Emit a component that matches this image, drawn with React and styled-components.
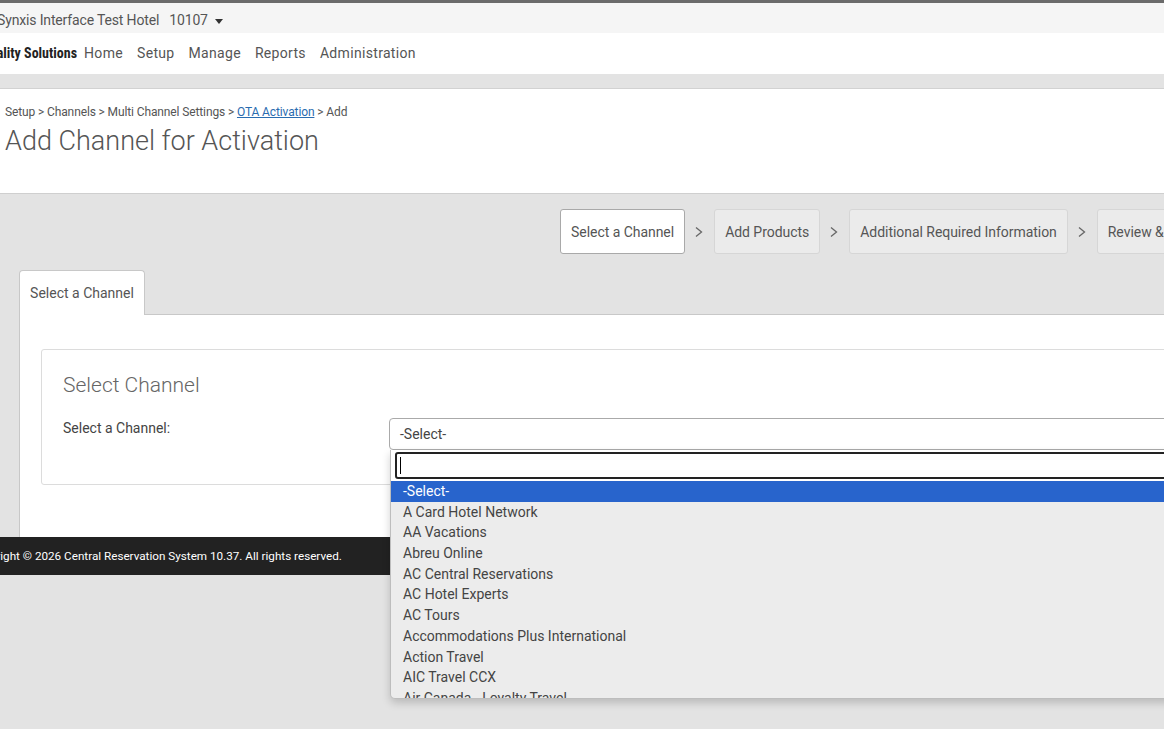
import React from "react";
import styled, { createGlobalStyle } from "styled-components";

const Global = createGlobalStyle`
  html, body { margin: 0; padding: 0; background: #e3e3e3; overflow: hidden; }
  body { font-family: Roboto, "Liberation Sans", Arial, sans-serif; color: #555; }
  * { box-sizing: border-box; }
`;

const Page = styled.div`
  width: 1400px;
  margin-left: -40px;
  min-height: 729px;
  background: #e3e3e3;
  display: flex;
  flex-direction: column;
`;

const TopBar = styled.div`
  height: 33px;
  border-top: 3px solid #6b6b6b;
  background: #f5f5f5;
  display: flex;
  align-items: center;
  padding: 4px 0 0 37px;
  font-size: 14px;
  letter-spacing: -0.15px;
  color: #555;
  gap: 10px;
`;

const Caret = styled.span`
  display: inline-block;
  width: 0;
  height: 0;
  border-left: 4px solid transparent;
  border-right: 4px solid transparent;
  border-top: 5px solid #333;
  margin-left: 7px;
  vertical-align: middle;
`;

const NavBar = styled.div`
  height: 41px;
  background: #fff;
  display: flex;
  align-items: center;
  gap: 14px;
  padding-bottom: 2px;
`;

const Brand = styled.span`
  font-family: "Liberation Sans Narrow", "Roboto Condensed", "Liberation Sans", sans-serif;
  font-weight: bold;
  font-size: 14px;
  color: #222;
  margin-right: -7px;
`;

const NavLink = styled.span`
  font-size: 14px;
  color: #555;
  letter-spacing: 0.32px;
`;

const Strip = styled.div`
  height: 15px;
  background: #e3e3e3;
  border-bottom: 1px solid #d2d2d2;
`;

const Header = styled.div`
  height: 105px;
  background: #fff;
  border-bottom: 1px solid #cfcfcf;
  padding: 14px 0 0 45px;
`;

const Crumbs = styled.div`
  font-size: 12px;
  letter-spacing: -0.12px;
  color: #555;
  line-height: 18px;
  a { color: #2a6cb0; text-decoration: underline; }
`;

const Title = styled.h1`
  margin: 3px 0 0;
  font-size: 27px;
  font-weight: 300;
  color: #555;
  line-height: 34px;
`;

const Steps = styled.div`
  display: flex;
  align-items: center;
  padding: 15px 0 0 600px;
  height: 60px;
`;

const Step = styled.div`
  height: 45px;
  display: flex;
  align-items: center;
  padding: 0 10px;
  font-size: 14px;
  letter-spacing: -0.04px;
  white-space: nowrap;
  border-radius: 3px;
  color: #555;
  background: ${(p) => (p.$active ? "#fff" : "#ebebeb")};
  border: 1px solid ${(p) => (p.$active ? "#a9a9a9" : "#d6d6d6")};
`;

const Chevron = styled.svg`
  width: 29px;
  height: 14px;
  flex: none;
`;

const TabArea = styled.div`
  padding: 16px 0 0 59px;
`;

const TabRow = styled.div`
  display: flex;
`;

const Tab = styled.div`
  height: 45px;
  width: 126px;
  display: flex;
  align-items: center;
  justify-content: center;
  font-size: 14px;
  background: #fff;
  border: 1px solid #c8c8c8;
  border-bottom: none;
  border-radius: 4px 4px 0 0;
  position: relative;
  z-index: 1;
  margin-bottom: -1px;
`;

const Panel = styled.div`
  background: #fff;
  border: 1px solid #c8c8c8;
  border-right: none;
  border-bottom: none;
  height: 223px;
  padding: 34px 0 0 21px;
`;

const Card = styled.div`
  border: 1px solid #dcdcdc;
  border-radius: 3px;
  height: 136px;
  padding: 22px 0 0 21px;
`;

const CardTitle = styled.h2`
  margin: 0;
  font-size: 21px;
  font-weight: 300;
  color: #666;
  line-height: 26px;
`;

const FieldRow = styled.div`
  display: grid;
  grid-template-columns: 326px 1fr;
  margin-top: 20px;
`;

const Label = styled.div`
  font-size: 14px;
  color: #444;
  padding-top: 2px;
`;

const SelectWrap = styled.div`
  position: relative;
`;

const SelectBox = styled.div`
  height: 32px;
  border: 1px solid #aaa;
  border-radius: 4px;
  display: flex;
  align-items: center;
  padding-left: 10px;
  font-size: 14px;
  color: #444;
  background: #fff;
`;

const Dropdown = styled.div`
  position: absolute;
  top: 32px;
  left: 1px;
  right: 0;
  height: 249px;
  background: #ececec;
  border: 1px solid #bdbdbd;
  border-top: none;
  border-radius: 0 0 0 5px;
  box-shadow: 0 4px 8px rgba(0, 0, 0, 0.18);
  overflow: hidden;
  z-index: 5;
`;

const SearchWrap = styled.div`
  padding: 2px 0 2px 4px;
  background: #fff;
`;

const Search = styled.div`
  height: 27px;
  border: 2px solid #222;
  border-radius: 3px;
  background: #fff;
  display: flex;
  align-items: center;
  padding-left: 3px;
`;

const Cursor = styled.span`
  width: 1px;
  height: 17px;
  background: #000;
`;

const Option = styled.div`
  height: 20.7px;
  line-height: 20.7px;
  padding-left: 12px;
  font-size: 14px;
  white-space: nowrap;
  color: ${(p) => (p.$selected ? "#fff" : "#444")};
  background: ${(p) => (p.$selected ? "#2864cc" : "transparent")};
`;

const Footer = styled.div`
  height: 38px;
  background: #222;
  color: #fff;
  font-size: 11.7px;
  display: flex;
  align-items: center;
  padding-left: 10px;
`;

const options = [
  "-Select-",
  "A Card Hotel Network",
  "AA Vacations",
  "Abreu Online",
  "AC Central Reservations",
  "AC Hotel Experts",
  "AC Tours",
  "Accommodations Plus International",
  "Action Travel",
  "AIC Travel CCX",
  "Air Canada - Loyalty Travel",
  "Air Canada Vacations",
];

const Arrow = () => (
  <Chevron viewBox="0 0 29 14">
    <path d="M11 2.5 L16.5 7 L11 11.5" fill="none" stroke="#666" strokeWidth="1.3" />
  </Chevron>
);

export default function App() {
  return (
    <>
      <Global />
      <Page>
        <TopBar>
          <span>Synxis Interface Test Hotel</span>
          <span>
            10107
            <Caret />
          </span>
        </TopBar>
        <NavBar>
          <Brand>Hospitality Solutions</Brand>
          <NavLink>Home</NavLink>
          <NavLink>Setup</NavLink>
          <NavLink>Manage</NavLink>
          <NavLink>Reports</NavLink>
          <NavLink>Administration</NavLink>
        </NavBar>
        <Strip />
        <Header>
          <Crumbs>
            Setup &gt; Channels &gt; Multi Channel Settings &gt; <a>OTA Activation</a> &gt; Add
          </Crumbs>
          <Title>Add Channel for Activation</Title>
        </Header>
        <Steps>
          <Step $active>Select a Channel</Step>
          <Arrow />
          <Step>Add Products</Step>
          <Arrow />
          <Step>Additional Required Information</Step>
          <Arrow />
          <Step>Review &amp; Submit</Step>
        </Steps>
        <TabArea>
          <TabRow>
            <Tab>Select a Channel</Tab>
          </TabRow>
          <Panel>
            <Card>
              <CardTitle>Select Channel</CardTitle>
              <FieldRow>
                <Label>Select a Channel:</Label>
                <SelectWrap>
                  <SelectBox>-Select-</SelectBox>
                  <Dropdown>
                    <SearchWrap>
                      <Search>
                        <Cursor />
                      </Search>
                    </SearchWrap>
                    {options.map((o, i) => (
                      <Option key={o} $selected={i === 0}>
                        {o}
                      </Option>
                    ))}
                  </Dropdown>
                </SelectWrap>
              </FieldRow>
            </Card>
          </Panel>
        </TabArea>
        <Footer>Copyright © 2026 Central Reservation System 10.37. All rights reserved.</Footer>
      </Page>
    </>
  );
}
